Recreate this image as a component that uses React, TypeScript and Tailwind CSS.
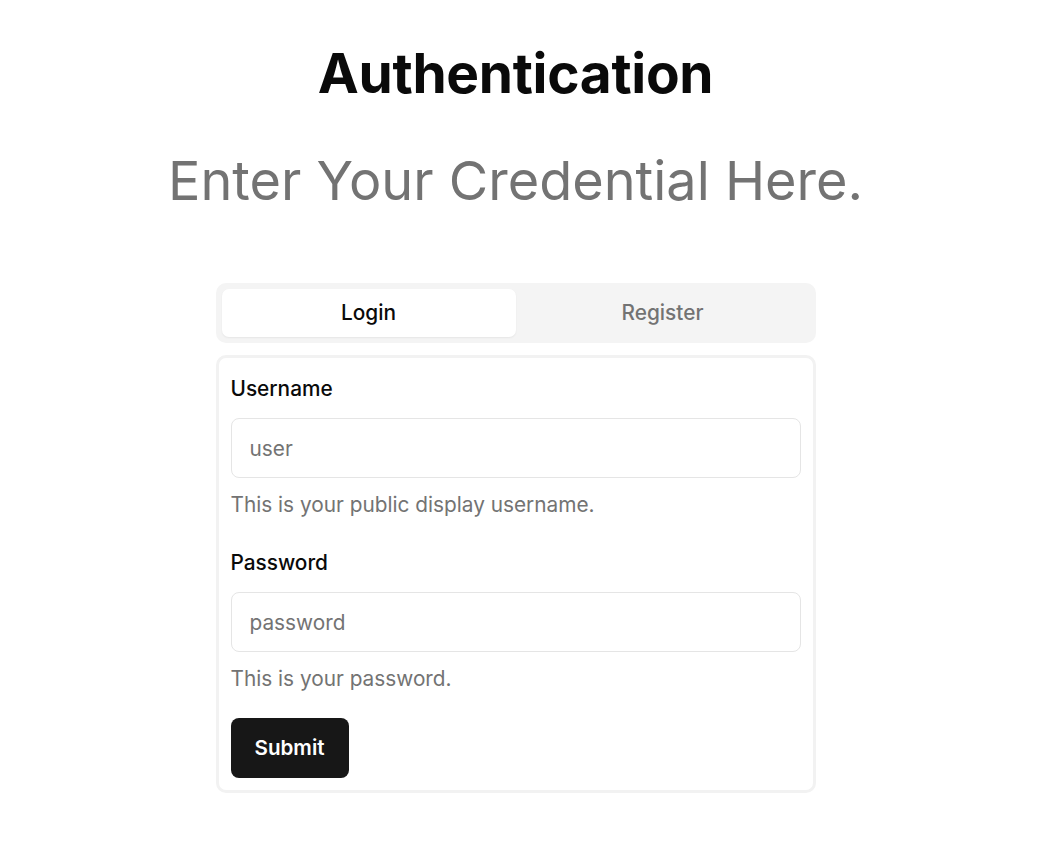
import React, { useState } from "react";

export default function App() {
  const [tab, setTab] = useState<"login" | "register">("login");
  return (
    <div
      className="min-h-screen bg-white flex flex-col items-center pr-[15px]"
      style={{ fontFamily: "Inter, 'Noto Sans', sans-serif" }}
    >
      <h1 className="mt-[40px] text-[55px] leading-[66px] font-bold text-[#0a0a0a] tracking-[-0.3px]">
        Authentication
      </h1>
      <p className="mt-[43px] text-[54px] leading-[64px] font-normal text-[#737373]">
        Enter Your Credential Here.
      </p>
      <div className="mt-[70px] w-[600px]">
        <div className="h-[60px] rounded-[10px] bg-[#f4f4f4] p-[6px] flex">
          <button
            onClick={() => setTab("login")}
            className={`flex-1 rounded-[7px] text-[20.8px] font-medium ${
              tab === "login"
                ? "bg-white text-[#0a0a0a] shadow-[0_1px_2px_rgba(0,0,0,0.06)]"
                : "text-[#737373]"
            }`}
          >
            Login
          </button>
          <button
            onClick={() => setTab("register")}
            className={`flex-1 rounded-[7px] text-[20.8px] font-medium ${
              tab === "register"
                ? "bg-white text-[#0a0a0a] shadow-[0_1px_2px_rgba(0,0,0,0.06)]"
                : "text-[#737373]"
            }`}
          >
            Register
          </button>
        </div>
        <div className="mt-[12px] rounded-[10px] border-[3px] border-[#f2f2f2] px-[12px] pt-[17px] pb-[12px]">
          <label className="block text-[20.8px] leading-[28px] font-medium text-[#0a0a0a]">
            Username
          </label>
          <input
            placeholder="user"
            className="mt-[15px] block w-full h-[60px] rounded-[8px] border border-[#e5e5e5] px-[18px] text-[20.8px] text-[#0a0a0a] placeholder:text-[#737373] outline-none"
          />
          <p className="mt-[13px] text-[20.8px] leading-[28px] text-[#737373]">
            This is your public display username.
          </p>
          <label className="mt-[30px] block text-[20.8px] leading-[28px] font-medium text-[#0a0a0a]">
            Password
          </label>
          <input
            placeholder="password"
            type="password"
            className="mt-[15px] block w-full h-[60px] rounded-[8px] border border-[#e5e5e5] px-[18px] text-[20.8px] text-[#0a0a0a] placeholder:text-[#737373] outline-none"
          />
          <p className="mt-[13px] text-[20.8px] leading-[28px] text-[#737373]">
            This is your password.
          </p>
          <button className="mt-[25px] h-[60px] px-[24px] rounded-[8px] bg-[#171717] text-white text-[20.6px] font-semibold">
            Submit
          </button>
        </div>
      </div>
    </div>
  );
}
